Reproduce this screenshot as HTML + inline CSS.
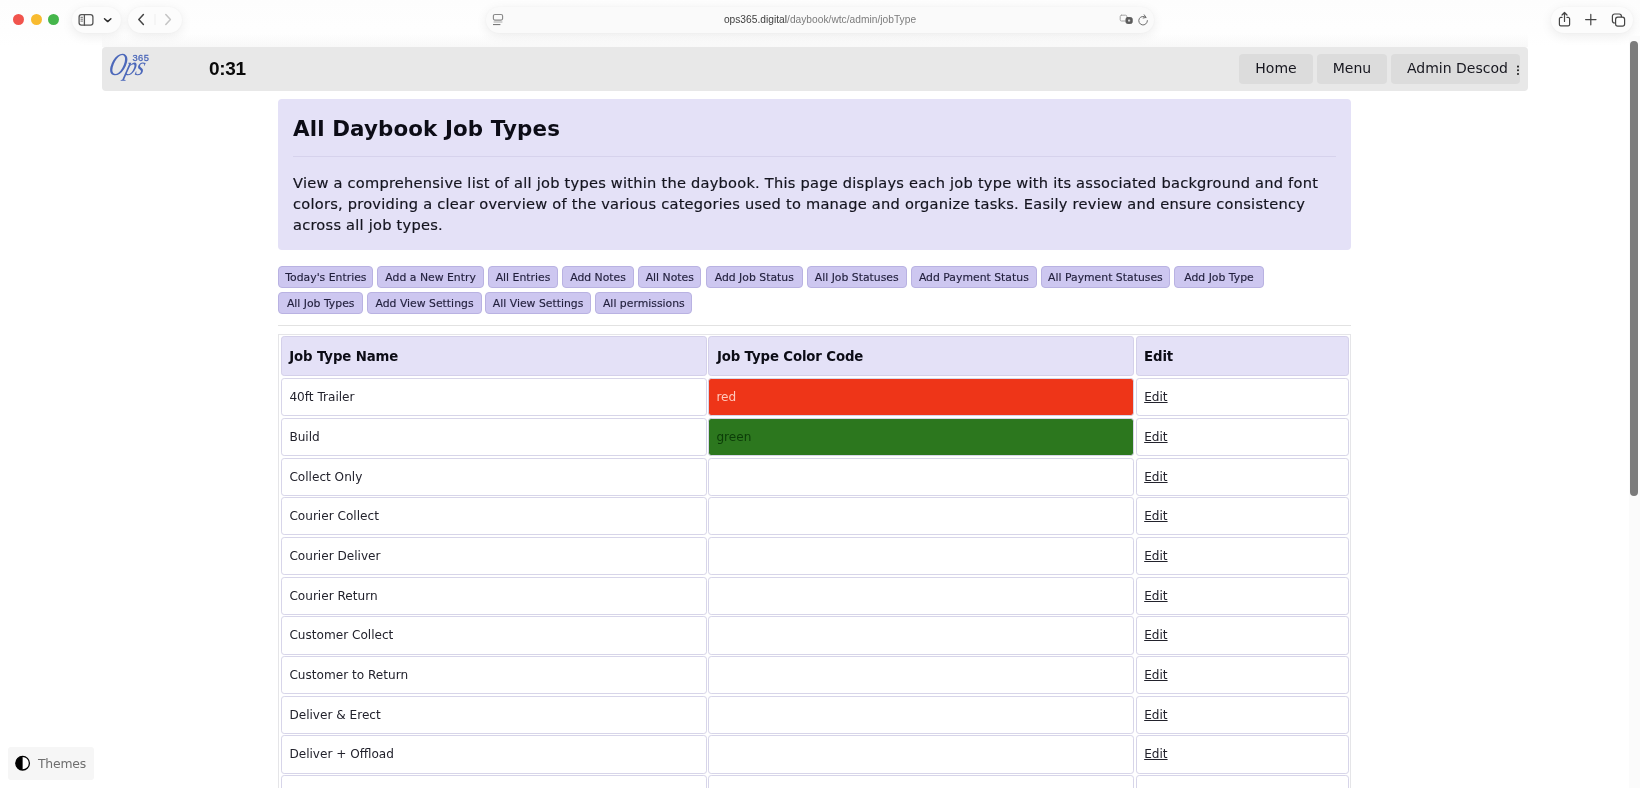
<!DOCTYPE html>
<html lang="en">
<head>
<meta charset="utf-8">
<title>All Daybook Job Types</title>
<style>
*{box-sizing:border-box;margin:0;padding:0}
html,body{width:1640px;height:788px;overflow:hidden;background:#fff}
body{position:relative;will-change:transform;font-family:"DejaVu Sans","Liberation Sans",sans-serif;color:#10101c}
.abs{position:absolute}
/* ---------- Safari chrome ---------- */
#chrome{left:0;top:0;width:1640px;height:46px;background:linear-gradient(#fdfdfd 0,#fefefe 30px,#fff 46px)}
.pill{position:absolute;top:7px;height:25.5px;border-radius:13px;background:#fcfcfc;box-shadow:0 3px 12px rgba(0,0,0,.075),0 0 2px rgba(0,0,0,.04)}
.tl{position:absolute;top:14px;width:11px;height:11px;border-radius:50%}
#url{left:486px;width:668px;background:#fafafa}
#urltext{position:absolute;left:0;right:0;top:0;height:26px;line-height:26px;text-align:center;font-family:"Liberation Sans",sans-serif;font-size:10.2px;color:#7c7c7c;letter-spacing:.02px}
#urltext b{font-weight:400;color:#3e3e3e}
/* ---------- page ---------- */
#nav{left:102px;top:47px;width:1426px;height:44px;background:#e8e8e8;border-radius:4px}
.nbtn{position:absolute;top:7px;height:30px;background:#dcdcdc;border-radius:4px;font-size:14px;line-height:28.6px;text-align:center;color:#17171f;white-space:nowrap;overflow:hidden}
#timer{left:107px;top:9px;font-family:"Liberation Sans",sans-serif;font-size:19px;font-weight:700;line-height:26px;color:#0a0a0a;letter-spacing:-.3px;transform:translateY(-.5px)}
#card{left:278px;top:99px;width:1073px;height:151px;background:#e4e1f7;border-radius:4px}
#card h1{position:absolute;left:15px;top:15px;font-size:21.4px;line-height:30px;font-weight:700;color:#0c0c16;white-space:nowrap;letter-spacing:.12px;transform:translateY(-.2px)}
#card .hr{position:absolute;left:15px;right:15px;top:57.4px;height:1px;background:#d6d2ec}
#card p{position:absolute;left:15px;top:73px;width:1050px;font-size:14.6px;line-height:21px;color:#14141f;letter-spacing:.24px;-webkit-text-stroke:.18px #14141f}
.btn{position:absolute;height:22px;background:#cdc7f0;border:1px solid #b9b2e2;border-radius:4px;font-size:10.85px;line-height:22px;text-align:center;color:#211f3c;-webkit-text-stroke:.15px #211f3c;white-space:nowrap}
#hr2{left:278px;top:325px;width:1073px;height:1px;background:#e2e2e2}
#tbl{left:278.4px;top:333.6px;width:1073px;height:470px;border:1px solid #e5e5e8;border-bottom:0}
.c{position:absolute;height:38.2px;line-height:36.3px;border:1px solid #d7d5e9;border-radius:3.2px;background:#fff;font-size:12.1px;color:#22222c;padding-left:7.6px;white-space:nowrap}
.c.h{background:#e4e1f7;font-weight:700;font-size:13.3px;color:#0c0c16;border-color:#d4d0ea;line-height:40.7px;padding-left:7.5px;letter-spacing:-.13px}
.c.red{background:#ee3518;color:#ffc9bd;padding-left:7px}
.c.grn{background:#2c771e;color:#0c3d08;padding-left:7px}
.c a{color:#22222c;text-decoration:underline}
#themes{left:8px;top:747.3px;width:86.4px;height:33px;background:#f6f6f6;border-radius:3px;font-size:12.4px;color:#6e6e6e;line-height:34px;letter-spacing:-.2px}
</style>
</head>
<body>
<div id="chrome" class="abs">
  <span class="tl" style="left:13.4px;background:#f1544d"></span>
  <span class="tl" style="left:30.8px;background:#f8bb30"></span>
  <span class="tl" style="left:47.5px;background:#45b64b"></span>
  <div class="pill" style="left:72px;width:49px">
    <svg class="abs" style="left:0;top:0" width="49" height="26" viewBox="0 0 49 26" fill="none" stroke="#555" stroke-width="1.2" stroke-linecap="round" stroke-linejoin="round">
      <rect x="7.1" y="7.6" width="13.8" height="10.6" rx="2.4" stroke-width="1.3"/>
      <path d="M12.4 7.6v10.6" stroke-width="1.3"/>
      <path d="M8.9 10.3h1.6M8.9 12.2h1.6M8.9 14.1h1.6" stroke-width=".9"/>
      <path d="M32.5 11.7l3.2 2.9 3.2-2.9" stroke="#2a2a2a" stroke-width="1.45"/>
    </svg>
  </div>
  <div class="pill" style="left:128px;width:54px">
    <svg class="abs" style="left:0;top:0" width="54" height="26" viewBox="0 0 54 26" fill="none" stroke-width="1.5" stroke-linecap="round" stroke-linejoin="round">
      <path d="M15.4 7.6l-4.6 4.9 4.6 4.9" stroke="#444"/>
      <path d="M27 7.5v10" stroke="#eee" stroke-width="1"/>
      <path d="M37.8 7.6l4.6 4.9-4.6 4.9" stroke="#c4c4c4"/>
    </svg>
  </div>
  <div class="pill" id="url"><div id="urltext"><b>ops365.digital</b>/daybook/wtc/admin/jobType</div>
    <svg class="abs" style="left:6px;top:6px" width="14" height="14" viewBox="0 0 14 14" fill="none" stroke="#8a8a8a" stroke-width="1" stroke-linecap="round">
      <rect x="1.4" y="1.5" width="9.2" height="5.6" rx="1.5" stroke-width="1.15"/>
      <path d="M2 9h8" stroke="#a8a8a8"/><path d="M1.4 11.6h6.6" stroke="#6c6c6c"/>
    </svg>
    <svg class="abs" style="left:632px;top:5px" width="32" height="16" viewBox="0 0 32 16" fill="none" stroke="#777" stroke-width="1" stroke-linecap="round" stroke-linejoin="round">
      <rect x="2.2" y="3.2" width="6.6" height="5.8" rx="1.3" stroke="#a4a4a4"/>
      <rect x="8" y="5.6" width="6.2" height="5.8" rx="1.5" fill="#5c5c5c" stroke="#5c5c5c"/>
      <rect x="10" y="7.4" width="2.2" height="2.2" rx=".5" fill="#d8d8d8" stroke="none"/>
      <path d="M27.9 5.4a4.3 4.3 0 1 0 1.5 3.2" stroke="#6e6e6e"/>
      <path d="M26.2 2.8l1.9 2.7-3 .5" stroke="#6e6e6e"/>
    </svg>
  </div>
  <div class="pill" style="left:1551px;width:82px">
    <svg class="abs" style="left:0;top:0" width="82" height="26" viewBox="0 0 82 26" fill="none" stroke="#444" stroke-width="1.2" stroke-linecap="round" stroke-linejoin="round">
      <path d="M11 10.4h-1.2a1.4 1.4 0 0 0-1.4 1.4v5.6a1.4 1.4 0 0 0 1.4 1.4h7.4a1.4 1.4 0 0 0 1.4-1.4v-5.6a1.4 1.4 0 0 0-1.4-1.4H16"/>
      <path d="M13.5 14.4V5.8M11 8l2.5-2.5L16 8"/>
      <path d="M34.6 12.6h10.4M39.8 7.4v10.4"/>
      <rect x="61.4" y="7" width="9" height="9" rx="2.2"/>
      <rect x="64.6" y="10.2" width="9" height="9" rx="2.2" fill="#fff"/>
    </svg>
  </div>
  <div class="abs" style="left:1628.5px;top:36px;width:11.5px;height:752px;background:#fbfbfb"></div>
  <div class="abs" style="left:1629.5px;top:41px;width:8.5px;height:454.5px;border-radius:4.25px;background:#7b7b7b"></div>
</div>

<div class="abs" style="left:102px;top:33px;width:1426px;height:14px;background:linear-gradient(rgba(236,236,236,0),rgba(236,236,236,.35))"></div>
<div id="nav" class="abs">
  <svg class="abs" style="left:4px;top:3px" width="52" height="38" viewBox="0 0 52 38" font-family="'Liberation Serif','DejaVu Serif',serif" font-style="italic" fill="#4c68ba">
    <text transform="translate(1.2 25.2) skewX(-14) scale(.74 1)" font-size="32">O</text>
    <text transform="translate(17.6 25) skewX(-16) scale(.84 1)" font-size="26.5" letter-spacing="-.5">ps</text>
    <text x="26.6" y="11.1" font-family="'Liberation Sans',sans-serif" font-style="normal" font-weight="400" font-size="9.3" letter-spacing=".35" fill="#4c68ba" stroke="#4c68ba" stroke-width=".3">365</text>
  </svg>
  <div id="timer" class="abs">0:31</div>
  <div class="nbtn" style="left:1137px;width:74px">Home</div>
  <div class="nbtn" style="left:1215px;width:70px">Menu</div>
  <div class="nbtn" style="left:1289px;width:129px;text-align:left;padding-left:16px">Admin Descod<svg style="position:absolute;left:125.4px;top:11px" width="4" height="12" viewBox="0 0 4 12"><circle cx="2" cy="1.6" r="1.05" fill="#222"/><circle cx="2" cy="5.3" r="1.05" fill="#222"/><circle cx="2" cy="9" r="1.05" fill="#222"/></svg></div>
</div>

<div id="card" class="abs">
  <h1>All Daybook Job Types</h1>
  <div class="hr"></div>
  <p>View a comprehensive list of all job types within the daybook. This page displays each job type with its associated background and font colors, providing a clear overview of the various categories used to manage and organize tasks. Easily review and ensure consistency across all job types.</p>
</div>

<div id="hr2" class="abs"></div>
<div id="btns">
  <div class="btn" style="left:278.4px;top:266px;width:95.0px">Today's Entries</div>
  <div class="btn" style="left:377.4px;top:266px;width:106.4px">Add a New Entry</div>
  <div class="btn" style="left:488.1px;top:266px;width:69.8px">All Entries</div>
  <div class="btn" style="left:562.3px;top:266px;width:71.5px">Add Notes</div>
  <div class="btn" style="left:638.1px;top:266px;width:63.4px">All Notes</div>
  <div class="btn" style="left:705.6px;top:266px;width:97.3px">Add Job Status</div>
  <div class="btn" style="left:806.9px;top:266px;width:99.7px">All Job Statuses</div>
  <div class="btn" style="left:910.9px;top:266px;width:125.9px">Add Payment Status</div>
  <div class="btn" style="left:1040.5px;top:266px;width:129.8px">All Payment Statuses</div>
  <div class="btn" style="left:1174.4px;top:266px;width:89.2px">Add Job Type</div>
  <div class="btn" style="left:278.4px;top:292px;width:84.6px">All Job Types</div>
  <div class="btn" style="left:367.3px;top:292px;width:114.4px">Add View Settings</div>
  <div class="btn" style="left:485.4px;top:292px;width:105.4px">All View Settings</div>
  <div class="btn" style="left:595.2px;top:292px;width:97.3px">All permissions</div>
</div>
<div id="tbl" class="abs">
  <div class="c h" style="left:1.4px;top:1.15px;width:426.3px;height:40.75px">Job Type Name</div>
  <div class="c h" style="left:429.0px;top:1.15px;width:425.7px;height:40.75px">Job Type Color Code</div>
  <div class="c h" style="left:856.2px;top:1.15px;width:213.4px;height:40.75px">Edit</div>
  <div class="c" style="left:1.4px;top:43.60px;width:426.3px">40ft Trailer</div>
  <div class="c red" style="left:429.0px;top:43.60px;width:425.7px">red</div>
  <div class="c" style="left:856.2px;top:43.60px;width:213.4px"><a>Edit</a></div>
  <div class="c" style="left:1.4px;top:83.29px;width:426.3px">Build</div>
  <div class="c grn" style="left:429.0px;top:83.29px;width:425.7px">green</div>
  <div class="c" style="left:856.2px;top:83.29px;width:213.4px"><a>Edit</a></div>
  <div class="c" style="left:1.4px;top:122.98px;width:426.3px">Collect Only</div>
  <div class="c" style="left:429.0px;top:122.98px;width:425.7px"></div>
  <div class="c" style="left:856.2px;top:122.98px;width:213.4px"><a>Edit</a></div>
  <div class="c" style="left:1.4px;top:162.67px;width:426.3px">Courier Collect</div>
  <div class="c" style="left:429.0px;top:162.67px;width:425.7px"></div>
  <div class="c" style="left:856.2px;top:162.67px;width:213.4px"><a>Edit</a></div>
  <div class="c" style="left:1.4px;top:202.36px;width:426.3px">Courier Deliver</div>
  <div class="c" style="left:429.0px;top:202.36px;width:425.7px"></div>
  <div class="c" style="left:856.2px;top:202.36px;width:213.4px"><a>Edit</a></div>
  <div class="c" style="left:1.4px;top:242.05px;width:426.3px">Courier Return</div>
  <div class="c" style="left:429.0px;top:242.05px;width:425.7px"></div>
  <div class="c" style="left:856.2px;top:242.05px;width:213.4px"><a>Edit</a></div>
  <div class="c" style="left:1.4px;top:281.74px;width:426.3px">Customer Collect</div>
  <div class="c" style="left:429.0px;top:281.74px;width:425.7px"></div>
  <div class="c" style="left:856.2px;top:281.74px;width:213.4px"><a>Edit</a></div>
  <div class="c" style="left:1.4px;top:321.43px;width:426.3px">Customer to Return</div>
  <div class="c" style="left:429.0px;top:321.43px;width:425.7px"></div>
  <div class="c" style="left:856.2px;top:321.43px;width:213.4px"><a>Edit</a></div>
  <div class="c" style="left:1.4px;top:361.12px;width:426.3px">Deliver &amp; Erect</div>
  <div class="c" style="left:429.0px;top:361.12px;width:425.7px"></div>
  <div class="c" style="left:856.2px;top:361.12px;width:213.4px"><a>Edit</a></div>
  <div class="c" style="left:1.4px;top:400.81px;width:426.3px">Deliver + Offload</div>
  <div class="c" style="left:429.0px;top:400.81px;width:425.7px"></div>
  <div class="c" style="left:856.2px;top:400.81px;width:213.4px"><a>Edit</a></div>
  <div class="c" style="left:1.4px;top:440.50px;width:426.3px"></div>
  <div class="c" style="left:429.0px;top:440.50px;width:425.7px"></div>
  <div class="c" style="left:856.2px;top:440.50px;width:213.4px"></div>
</div>

<div id="themes" class="abs">
  <svg class="abs" style="left:6px;top:8px" width="17" height="17" viewBox="0 0 17 17"><circle cx="8.6" cy="8.2" r="6.8" fill="#fff" stroke="#000" stroke-width="1.3"/><path d="M8.6 1.4a6.8 6.8 0 0 0 0 13.6z" fill="#000"/></svg>
  <span style="position:absolute;left:30px">Themes</span></div>
</body>
</html>
